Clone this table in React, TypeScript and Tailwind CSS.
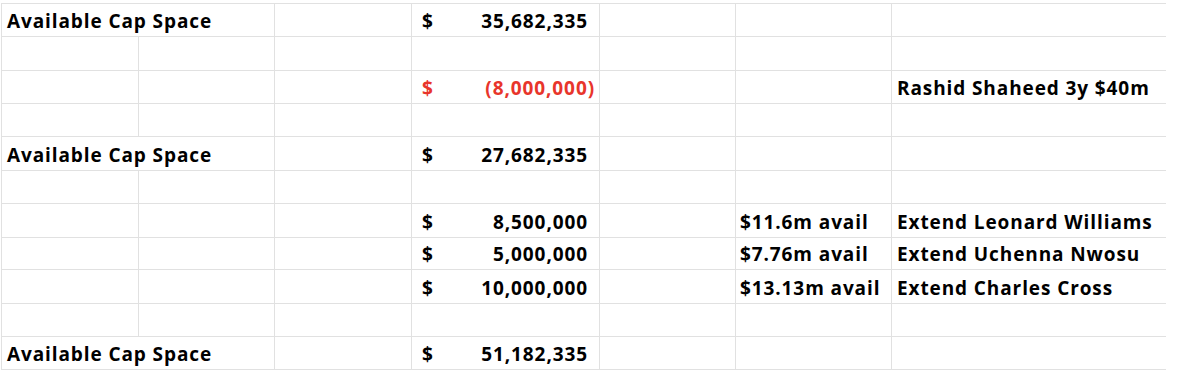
const line = "border-[#e1e1e1]";

type Row = {
  h: string;
  label?: string;
  amount?: string;
  red?: boolean;
  avail?: string;
  note?: string;
};

const ROWS: Row[] = [
  { h: "h-[33px]", label: "Available Cap Space", amount: "35,682,335" },
  { h: "h-[34px]" },
  { h: "h-[33px]", amount: "(8,000,000)", red: true, note: "Rashid Shaheed 3y $40m" },
  { h: "h-[33px]" },
  { h: "h-[34px]", label: "Available Cap Space", amount: "27,682,335" },
  { h: "h-[33px]" },
  { h: "h-[34px]", amount: "8,500,000", avail: "$11.6m avail", note: "Extend Leonard Williams" },
  { h: "h-[32px]", amount: "5,000,000", avail: "$7.76m avail", note: "Extend Uchenna Nwosu" },
  { h: "h-[34px]", amount: "10,000,000", avail: "$13.13m avail", note: "Extend Charles Cross" },
  { h: "h-[33px]" },
  { h: "h-[33px]", label: "Available Cap Space", amount: "51,182,335" },
];

function Cell({ w, children, right = true, className = "" }: { w: string; children?: React.ReactNode; right?: boolean; className?: string }) {
  return (
    <div className={`${w} h-full shrink-0 border-b ${line} ${right ? `border-r ${line}` : ""} flex items-end pb-[5px] overflow-visible whitespace-nowrap ${className}`}>
      {children}
    </div>
  );
}

export default function App() {
  return (
    <div className="w-[1186px] h-[378px] bg-white pt-[3px] pl-[1px] font-['Open_Sans',sans-serif] font-bold text-[19px] tracking-[0.9px] leading-none text-black">
      <div className={`border-t ${line} w-[1165px]`}>
        {ROWS.map((r, i) => (
          <div key={i} className={`flex ${r.h}`}>
            {r.label ? (
              <Cell w={`w-[274px] border-l`} className="pl-[5px]">{r.label}</Cell>
            ) : (
              <>
                <Cell w="w-[138px] border-l" />
                <Cell w="w-[136px]" />
              </>
            )}
            <Cell w="w-[137px]" />
            <Cell w="w-[188px]" className={`justify-between pl-[10px] ${r.red ? "text-[#e8352b] pr-[4px]" : "pr-[11px]"}`}>
              {r.amount && (
                <>
                  <span>$</span>
                  <span>{r.amount}</span>
                </>
              )}
            </Cell>
            <Cell w="w-[136px]" />
            <Cell w="w-[156px]" className="pl-[4px]">{r.avail}</Cell>
            <Cell w="w-[274px]" right={false} className="pl-[5px]">{r.note}</Cell>
          </div>
        ))}
      </div>
    </div>
  );
}
